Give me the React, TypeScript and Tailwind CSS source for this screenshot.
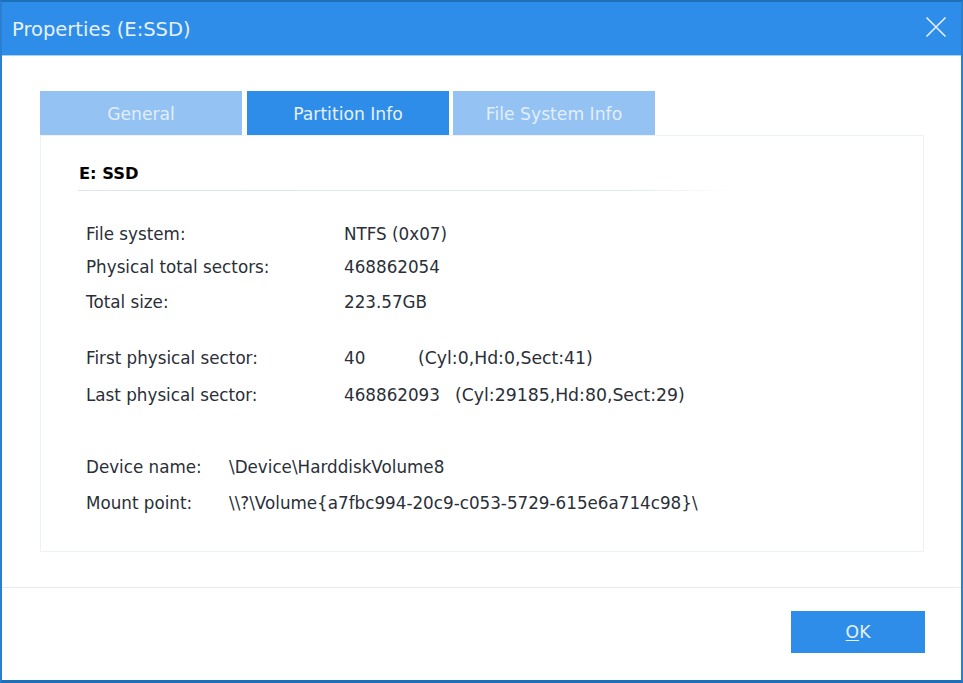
const rowClass = "flex h-6 items-center";

function Row({ label, value, extra, valueWidth = "w-[111px]" }: { label: string; value: string; extra?: string; valueWidth?: string }) {
  return (
    <div className={rowClass}>
      <span className="w-[258px] shrink-0">{label}</span>
      <span className={`${valueWidth} shrink-0`}>{value}</span>
      {extra && <span className="text-[17.3px]">{extra}</span>}
    </div>
  );
}

function DeviceRow({ label, value }: { label: string; value: string }) {
  return (
    <div className={rowClass}>
      <span className="w-[143px] shrink-0">{label}</span>
      <span>{value}</span>
    </div>
  );
}

export default function App() {
  return (
    <div className="flex h-[683px] w-[963px] flex-col border-x-2 border-b-[3px] border-t-2 border-x-[#2a7fd0] border-b-[#1c6fb8] border-t-[#1c6fb8] bg-white font-['DejaVu_Sans',sans-serif] text-[16.75px] text-[#2a2f38]">
      <div className="flex h-[54px] shrink-0 items-center justify-between border-b border-[#a9d0f5] bg-[#2e8de8] pl-[10px] pr-[14px]">
        <span className="pt-0.5 text-[19.5px] text-[#e6f1fc]">Properties (E:SSD)</span>
        <svg className="mb-1" width="22" height="22" viewBox="0 0 22 22" fill="none" stroke="#e6f1fc" strokeWidth="1.6">
          <path d="M1.5 1.5 20.5 20.5M20.5 1.5 1.5 20.5" />
        </svg>
      </div>

      <div className="flex-1 pl-[38px] pr-[37px] pt-[35px]">
        <div className="flex h-11 gap-[5px] text-[17.2px]">
          <div className="flex w-[202px] items-center justify-center bg-[#94c3f3] pt-1 text-[#e2eefb]">General</div>
          <div className="-mr-px flex w-[202px] items-center justify-center bg-[#2e8de8] pt-1 text-[#e6f1fc]">Partition Info</div>
          <div className="flex w-[202px] items-center justify-center bg-[#94c3f3] pt-1 text-[#e2eefb]">File System Info</div>
        </div>
        <div className="h-[417px] border border-[#edf2f8] pl-[37px] pt-[25px]">
          <div className="w-[652px] bg-gradient-to-r from-[#dfe6f0] via-[#e3e9f2] via-85% to-white pb-px">
            <div className="h-[29px] bg-white pl-px pt-px text-[16.3px] font-bold leading-6 text-black">E: SSD</div>
          </div>
          <div className="pl-2 pt-8">
            <Row label="File system:" value="NTFS (0x07)" />
            <div className="mt-[9px]">
              <Row label="Physical total sectors:" value="468862054" />
            </div>
            <div className="mt-[11px]">
              <Row label="Total size:" value="223.57GB" />
            </div>
            <div className="mt-8">
              <Row label="First physical sector:" value="40" extra="(Cyl:0,Hd:0,Sect:41)" valueWidth="w-[74px]" />
            </div>
            <div className="mt-[13px]">
              <Row label="Last physical sector:" value="468862093" extra="(Cyl:29185,Hd:80,Sect:29)" />
            </div>
            <div className="mt-12">
              <DeviceRow label="Device name:" value="\Device\HarddiskVolume8" />
            </div>
            <div className="mt-3">
              <DeviceRow label="Mount point:" value="\\?\Volume{a7fbc994-20c9-c053-5729-615e6a714c98}\" />
            </div>
          </div>
        </div>
      </div>

      <div className="flex h-[93px] shrink-0 items-start justify-end border-t border-[#e6ebf2] pr-9 pt-[23px]">
        <button className="flex h-[42px] w-[134px] items-center justify-center bg-[#2e8de8] pt-0.5 text-[17.2px] text-[#e6f1fc]">
          <span className="underline underline-offset-2">O</span>K
        </button>
      </div>
    </div>
  );
}
